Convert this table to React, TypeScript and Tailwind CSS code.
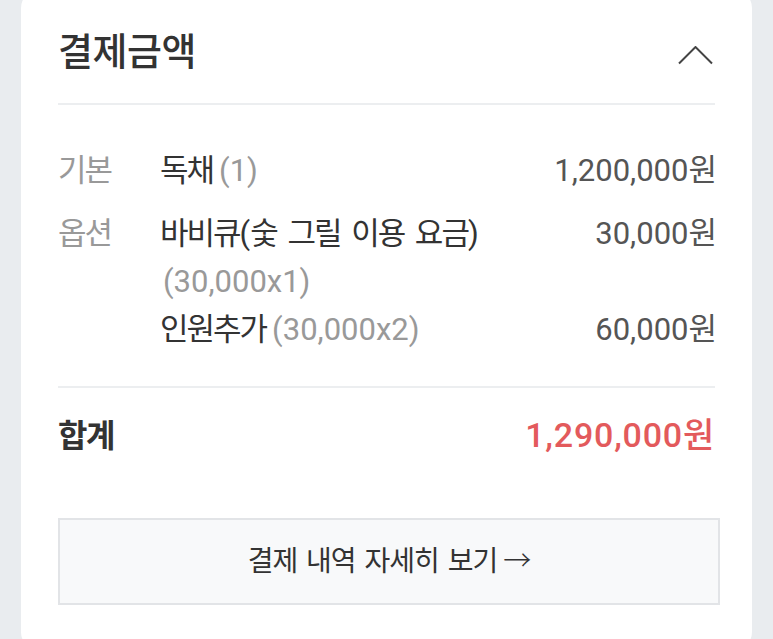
import React from "react";

const font = { fontFamily: 'Roboto, "Noto Sans CJK KR", "Noto Sans", sans-serif' };

function N({ children, className = "" }: { children: React.ReactNode; className?: string }) {
  return <span className={"tracking-normal [word-spacing:0px] " + className}>{children}</span>;
}

export default function App() {
  return (
    <div className="w-[773px] h-[639px] overflow-hidden bg-[#e9ecef]" style={font}>
      <div className="mx-[21px] -mt-[10px] pt-[10px] h-[660px] bg-white rounded-[18px] px-[37px]">
        <div className="h-[105px] flex items-center justify-between border-b-2 border-[#eceef0]">
          <h1 className="text-[38px] font-medium text-[#333] tracking-[-0.5px] leading-none">결제금액</h1>
          <svg width="35" height="19" viewBox="0 0 35 19" className="mr-[2px] mt-[7px]">
            <polyline points="1,17.5 17.5,1 34,17.5" fill="none" stroke="#444" strokeWidth="2" />
          </svg>
        </div>

        <div className="pt-[42px] pb-[32px] border-b-2 border-[#eceef0] text-[31px] leading-[48px] tracking-[-2px] [word-spacing:5px]">
          <div className="flex">
            <div className="w-[102px] text-[#999]">기본</div>
            <div className="flex-1 text-[#333]">
              독채<N className="text-[#999] ml-[6px]">(1)</N>
            </div>
            <N className="text-[#555] tracking-[1px] -mr-[2px]">1,200,000원</N>
          </div>
          <div className="flex mt-[15px]">
            <div className="w-[102px] text-[#999]">옵션</div>
            <div className="flex-1">
              <div className="flex justify-between">
                <div className="text-[#333]">
                  바비큐<N>(</N>숯 그릴 이용 요금<N>)</N>
                </div>
                <N className="text-[#555] tracking-[1px] -mr-[2px]">30,000원</N>
              </div>
              <div className="text-[#999] pl-[3px]">
                <N>(30,000x1)</N>
              </div>
              <div className="flex justify-between">
                <div className="text-[#333]">
                  인원추가<N className="text-[#999] ml-[6px]">(30,000x2)</N>
                </div>
                <N className="text-[#555] tracking-[1px] -mr-[2px]">60,000원</N>
              </div>
            </div>
          </div>
        </div>

        <div className="pt-[23px] flex justify-between items-center h-[72px]">
          <div className="text-[32px] font-bold text-[#333] tracking-[-1.5px]">합계</div>
          <div className="text-[34px] font-medium text-[#e35a5c] tracking-[0.8px]">1,290,000원</div>
        </div>

        <button className="mt-[58px] w-[662px] h-[87px] border-2 border-[#e2e4e7] bg-[#f8f9fa] flex items-center justify-center text-[28px] text-[#333] tracking-[-1px] [word-spacing:3px]">
          결제 내역 자세히 보기<span className="ml-[6px] font-light">→</span>
        </button>
      </div>
    </div>
  );
}
